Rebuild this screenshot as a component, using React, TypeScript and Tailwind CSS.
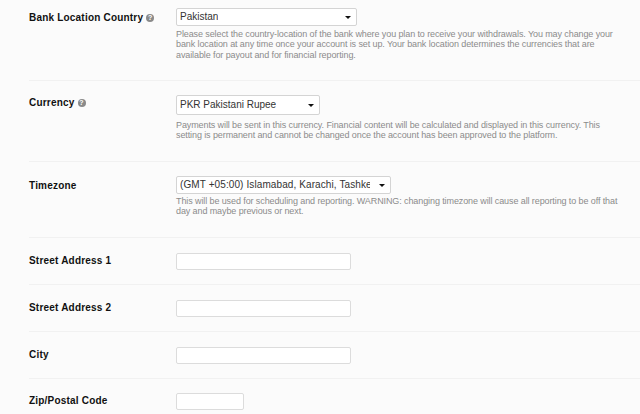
import React from "react";

/* Payout settings form: label column on the left, control and help on the right */

function HelpIcon() {
  return (
    <span className="ml-[3px] inline-flex h-[8px] w-[8px] items-center justify-center rounded-full bg-[#8a8a8a] text-[7px] font-bold leading-none text-white">
      ?
    </span>
  );
}

function Caret() {
  return <span className="h-0 w-0 border-x-[3px] border-t-[3px] border-x-transparent border-t-[#111]" />;
}

function SelectBox({
  value,
  className,
  textClass,
}: {
  value: string;
  className: string;
  textClass?: string;
}) {
  return (
    <div
      className={[
        "flex items-center justify-between rounded-[2px] border border-[#d4d4d4] bg-white pl-[3px] text-[10px] leading-none text-[#333]",
        className,
      ].join(" ")}
    >
      <span className={["overflow-hidden whitespace-nowrap", textClass ?? ""].join(" ")}>{value}</span>
      <Caret />
    </div>
  );
}

function TextRow({
  label,
  height,
  inputWidth = "w-[175px]",
}: {
  label: string;
  height: string;
  inputWidth?: string;
}) {
  return (
    <div className={["flex items-center border-b border-[#f1f1f1]", height].join(" ")}>
      <div className="w-[147px] pb-[2px] text-[10px] font-bold tracking-[0.2px] text-[#111]">{label}</div>
      <div className={["h-[17px] rounded-[2px] border border-[#dcdcdc] bg-white", inputWidth].join(" ")} />
    </div>
  );
}

function HelpText({ children, className }: { children: React.ReactNode; className: string }) {
  return (
    <p className={["w-[445px] text-[9px] leading-[10.3px] tracking-[-0.1px] text-[#8b8b8b]", className].join(" ")}>
      {children}
    </p>
  );
}

export default function App() {
  return (
    <div
      className="h-[414px] w-[640px] overflow-hidden bg-[#fbfbfb] pl-[29px]"
      style={{ fontFamily: '"Liberation Sans", Arial, sans-serif' }}
    >
      <div className="flex h-[81px] items-start border-b border-[#f1f1f1] pt-[8px]">
        <div className="flex w-[147px] items-center pt-[2px] text-[10px] font-bold tracking-[0.2px] text-[#111]">
          Bank Location Country
          <HelpIcon />
        </div>
        <div>
          <SelectBox value="Pakistan" className="h-[18px] w-[181px] pr-[5px]" />
          <HelpText className="mt-[3px]">
            Please select the country-location of the bank where you plan to receive your withdrawals. You may change
            your bank location at any time once your account is set up. Your bank location determines the currencies
            that are available for payout and for financial reporting.
          </HelpText>
        </div>
      </div>

      <div className="flex h-[81px] items-start border-b border-[#f1f1f1] pt-[14px]">
        <div className="flex w-[147px] items-center text-[10px] font-bold tracking-[0.2px] text-[#111]">
          Currency
          <HelpIcon />
        </div>
        <div>
          <SelectBox value="PKR Pakistani Rupee" className="h-[20px] w-[144px] pr-[5px]" />
          <HelpText className="mt-[5px]">
            Payments will be sent in this currency. Financial content will be calculated and displayed in this
            currency. This setting is permanent and cannot be changed once the account has been approved to the
            platform.
          </HelpText>
        </div>
      </div>

      <div className="flex h-[76px] items-start border-b border-[#f1f1f1] pt-[14px]">
        <div className="w-[147px] pt-[2px] text-[10px] font-bold tracking-[0.2px] text-[#111]">Timezone</div>
        <div>
          <SelectBox
            value="(GMT +05:00) Islamabad, Karachi, Tashkent"
            className="h-[18px] w-[215px] pr-[5px]"
            textClass="w-[190px] tracking-[0.1px]"
          />
          <HelpText className="mt-[2px]">
            This will be used for scheduling and reporting. WARNING: changing timezone will cause all reporting to be
            off that day and maybe previous or next.
          </HelpText>
        </div>
      </div>

      <TextRow label="Street Address 1" height="h-[47px]" />
      <TextRow label="Street Address 2" height="h-[47px]" />
      <TextRow label="City" height="h-[47px]" />
      <TextRow label="Zip/Postal Code" height="h-[46px]" inputWidth="w-[68px]" />
    </div>
  );
}
